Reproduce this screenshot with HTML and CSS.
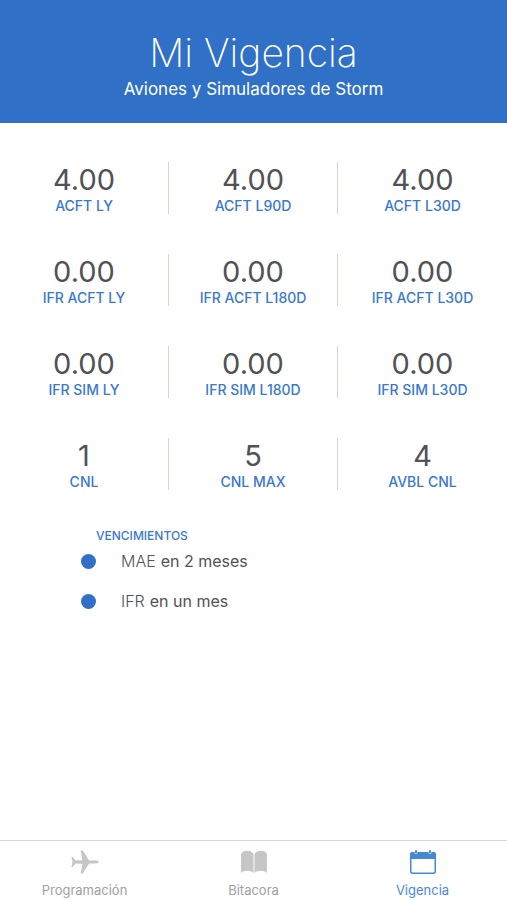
FILE: index.html
```html
<!DOCTYPE html>
<html lang="es">
<head>
    <meta charset="UTF-8">
    <meta name="viewport" content="width=device-width, initial-scale=1.0">
    <title>Mi Vigencia</title>
    <link rel="stylesheet" href="styles.css">
</head>
<body>
    <header class="header">
        <h1>Mi Vigencia</h1>
        <p>Aviones y Simuladores de Storm</p>
    </header>

    <main class="content">
        <div class="stats">
            <div class="stat"><span class="value">4.00</span><span class="label">ACFT LY</span></div>
            <div class="stat"><span class="value">4.00</span><span class="label">ACFT L90D</span></div>
            <div class="stat"><span class="value">4.00</span><span class="label">ACFT L30D</span></div>

            <div class="stat"><span class="value">0.00</span><span class="label">IFR ACFT LY</span></div>
            <div class="stat"><span class="value">0.00</span><span class="label">IFR ACFT L180D</span></div>
            <div class="stat"><span class="value">0.00</span><span class="label">IFR ACFT L30D</span></div>

            <div class="stat"><span class="value">0.00</span><span class="label">IFR SIM LY</span></div>
            <div class="stat"><span class="value">0.00</span><span class="label">IFR SIM L180D</span></div>
            <div class="stat"><span class="value">0.00</span><span class="label">IFR SIM L30D</span></div>

            <div class="stat"><span class="value">1</span><span class="label">CNL</span></div>
            <div class="stat"><span class="value">5</span><span class="label">CNL MAX</span></div>
            <div class="stat"><span class="value">4</span><span class="label">AVBL CNL</span></div>
        </div>

        <section class="expirations">
            <h2>VENCIMIENTOS</h2>
            <ul>
                <li><span class="doc">MAE</span> en 2 meses</li>
                <li><span class="doc">IFR</span> en un mes</li>
            </ul>
        </section>
    </main>

    <nav class="tabbar">
        <a href="#programacion" class="tab">
            <svg width="28" height="24" viewBox="0 0 28 24" fill="currentColor" aria-hidden="true">
                <path d="M0.500 7h1.300l2.700 3.600 7-.4L9.700 0.500h2.100L18 10.500l6 .1c2.500 0 4 .7 4 1.400s-1.500 1.400-4 1.400l-6 .1L11.800 23.500H9.700L11.500 13.800l-7-.4L1.800 17H0.500L1.500 12z"/>
            </svg>
            <span>Programación</span>
        </a>
        <a href="#bitacora" class="tab">
            <svg width="28" height="24" viewBox="0 0 28 24" fill="currentColor" aria-hidden="true">
                <path d="M1 4C2.500 -.5 11.500 -.5 13.500 4V23C11 20 4 20 1 23z"/>
                <path d="M14.500 4C16.500 -.5 25.500 -.5 27 4V23C24 20 17 20 14.500 23z"/>
            </svg>
            <span>Bitacora</span>
        </a>
        <a href="#vigencia" class="tab active">
            <svg width="28" height="24" viewBox="0 0 28 24" aria-hidden="true">
                <rect x="1.750" y="2.750" width="24.500" height="20.500" rx="2" fill="none" stroke="currentColor" stroke-width="1.500"/>
                <path d="M1 9V4.500Q1 2 3.500 2H24.500Q27 2 27 4.500V9z" fill="currentColor"/>
                <path d="M7 1v1.500M21 1v1.500" stroke="#fff" stroke-width="3" stroke-linecap="round"/>
                <path d="M7 1v1.500M21 1v1.500" stroke="currentColor" stroke-width="2" stroke-linecap="round"/>
            </svg>
            <span>Vigencia</span>
        </a>
    </nav>
</body>
</html>
```

FILE: styles.css
```css
* {
    box-sizing: border-box;
}
body {
    margin: 0;
    min-height: 100vh;
    display: flex;
    flex-direction: column;
    font-family: Inter, "Liberation Sans", sans-serif;
    background: #fff;
    color: #505255;
}
h1, h2, p, ul {
    margin: 0;
    padding: 0;
}
.header {
    background: #3070c6;
    color: #fff;
    text-align: center;
    padding: 29px 16px 22px;
}
.header h1 {
    font-size: 39px;
    font-weight: 200;
    line-height: 48px;
}
.header p {
    font-size: 17px;
    line-height: 24px;
}
.content {
    flex: 1;
    padding-top: 39px;
}
.stats {
    display: grid;
    grid-template-columns: repeat(3, 1fr);
    row-gap: 40px;
}
.stat {
    display: flex;
    flex-direction: column;
    align-items: center;
    height: 52px;
    border-right: 1px solid #d8d6cc;
}
.stat:nth-child(3n) {
    border-right: none;
}
.value {
    font-size: 29px;
    font-weight: 400;
    line-height: 36px;
}
.label {
    font-size: 14px;
    font-weight: 500;
    line-height: 16px;
    color: #3a78d0;
}
.expirations {
    padding: 38px 81px 0;
}
.expirations h2 {
    padding-left: 15px;
    font-size: 12px;
    font-weight: 500;
    line-height: 16px;
    color: #3a78d0;
}
.expirations ul {
    list-style: none;
    margin-top: -3px;
}
.expirations li {
    display: flex;
    align-items: center;
    gap: 5px;
    height: 40px;
    font-size: 16px;
}
.expirations li::before {
    content: "";
    width: 15px;
    height: 15px;
    margin-right: 20px;
    border-radius: 50%;
    background: #3070c6;
}
.doc {
    font-weight: 300;
}
.tabbar {
    display: flex;
    height: 60px;
    border-top: 1px solid #d4d4d4;
}
.tab {
    flex: 1;
    display: flex;
    flex-direction: column;
    align-items: center;
    gap: 8px;
    padding-top: 9px;
    font-size: 13px;
    line-height: 16px;
    color: #a0a0a0;
    text-decoration: none;
}
.tab svg {
    color: #c6c6c6;
}
.tab.active {
    color: #4c86e0;
}
.tab.active svg {
    color: #4489d2;
}
```
